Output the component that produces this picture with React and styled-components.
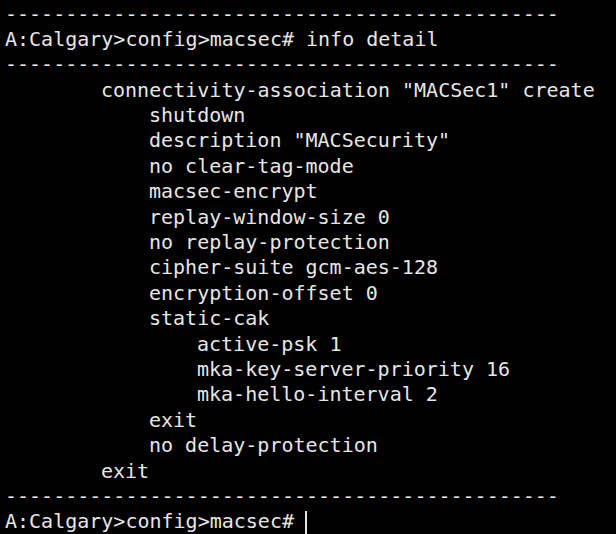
import React from "react";
import styled, { createGlobalStyle } from "styled-components";

const GlobalStyle = createGlobalStyle`
  html, body {
    margin: 0;
    padding: 0;
    background: #000;
  }
`;

const Terminal = styled.div`
  width: 616px;
  height: 534px;
  overflow: hidden;
  background: #000;
  color: #e6e6e6;
  font-family: "DejaVu Sans Mono", "Liberation Mono", monospace;
  font-size: 20px;
  line-height: 25.4px;
  padding: 1.5px 0 0 5px;
  box-sizing: border-box;
`;

const Line = styled.div`
  white-space: pre;
  height: 25.4px;
  padding-left: ${(p) => (p.indent || 0) * 12}px;
`;

const Cursor = styled.span`
  display: inline-block;
  width: 2px;
  height: 26px;
  background: #e6e6e6;
  vertical-align: -9px;
  margin-left: -1px;
`;

const rule = "-".repeat(46);
const prompt = "A:Calgary>config>macsec#";

const config = [
  [8, 'connectivity-association "MACSec1" create'],
  [12, "shutdown"],
  [12, 'description "MACSecurity"'],
  [12, "no clear-tag-mode"],
  [12, "macsec-encrypt"],
  [12, "replay-window-size 0"],
  [12, "no replay-protection"],
  [12, "cipher-suite gcm-aes-128"],
  [12, "encryption-offset 0"],
  [12, "static-cak"],
  [16, "active-psk 1"],
  [16, "mka-key-server-priority 16"],
  [16, "mka-hello-interval 2"],
  [12, "exit"],
  [12, "no delay-protection"],
  [8, "exit"],
];

export default function App() {
  return (
    <>
      <GlobalStyle />
      <Terminal>
        <Line>{rule}</Line>
        <Line>{prompt} info detail</Line>
        <Line>{rule}</Line>
        {config.map(([indent, text], i) => (
          <Line key={i} indent={indent}>
            {text}
          </Line>
        ))}
        <Line>{rule}</Line>
        <Line>
          {prompt} <Cursor />
        </Line>
      </Terminal>
    </>
  );
}
